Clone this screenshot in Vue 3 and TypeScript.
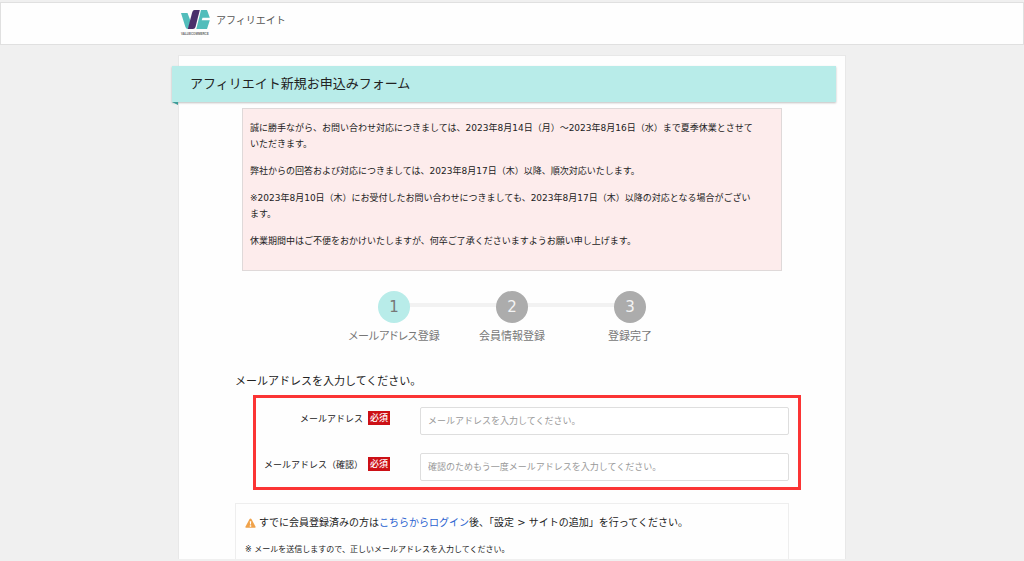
<script setup lang="ts">
import { ref } from 'vue'

interface Step {
  no: number
  label: string
}

interface Field {
  id: string
  label: string
  placeholder: string
}

const steps: Step[] = [
  { no: 1, label: 'メールアドレス登録' },
  { no: 2, label: '会員情報登録' },
  { no: 3, label: '登録完了' },
]
const current = ref(1)

const fields: Field[] = [
  { id: 'email', label: 'メールアドレス', placeholder: 'メールアドレスを入力してください。' },
  {
    id: 'email-confirm',
    label: 'メールアドレス（確認）',
    placeholder: '確認のためもう一度メールアドレスを入力してください。',
  },
]
const values = ref<Record<string, string>>({ email: '', 'email-confirm': '' })
</script>

<template>
  <div class="page">
    <header class="header">
      <div class="header-inner">
        <svg class="logo" viewBox="0 0 30 26" role="img" aria-label="VALUECOMMERCE">
          <path d="M0 3H6.500L9.500 11L7 19Q5 19 4.400 17Z" fill="#52bdbb" />
          <path d="M13.500 0H18.800L14.500 17Q13.900 19 12 19H6.800L11.300 2Q11.900 0 13.500 0Z" fill="#49306b" />
          <path d="M20 0H26L28.800 7.700H21.500L20.700 10.300H28.800L26 19H15.300Z" fill="#52bdbb" />
          <text class="logo-text" x="0" y="25">VALUECOMMERCE</text>
        </svg>
        <span class="service">アフィリエイト</span>
      </div>
    </header>

    <main class="card">
      <h1 class="ribbon">アフィリエイト新規お申込みフォーム</h1>

      <section class="notice">
        <p>
          誠に勝手ながら、お問い合わせ対応につきましては、2023年8月14日（月）〜2023年8月16日（水）まで夏季休業とさせて<br />いただきます。
        </p>
        <p>弊社からの回答および対応につきましては、2023年8月17日（木）以降、順次対応いたします。</p>
        <p>
          ※2023年8月10日（木）にお受付したお問い合わせにつきましても、2023年8月17日（木）以降の対応となる場合がござい<br />ます。
        </p>
        <p>休業期間中はご不便をおかけいたしますが、何卒ご了承くださいますようお願い申し上げます。</p>
      </section>

      <ol class="steps">
        <li v-for="s in steps" :key="s.no" class="step" :class="{ active: s.no === current }">
          <span class="circle">{{ s.no }}</span>
          <span class="step-label">{{ s.label }}</span>
        </li>
      </ol>

      <form class="form" @submit.prevent>
        <h2 class="lead">メールアドレスを入力してください。</h2>
        <div class="fields">
          <div v-for="f in fields" :key="f.id" class="row">
            <label class="label" :for="f.id">
              <span>{{ f.label }}</span>
              <span class="badge">必須</span>
            </label>
            <input :id="f.id" v-model="values[f.id]" class="input" type="email" :placeholder="f.placeholder" />
          </div>
        </div>
      </form>

      <section class="info">
        <p class="info-main">
          <svg class="warn" viewBox="0 0 12 11" aria-hidden="true">
            <path d="M6 .5Q6.600 .5 7 1.200L11.600 9.500Q12 10.700 10.800 10.800H1.200Q0 10.700 .4 9.500L5 1.200Q5.400 .5 6 .5Z" fill="#f0a24a" />
            <path d="M5.200 3.500H6.800L6.500 7.200H5.500ZM5.200 8H6.800V9.500H5.200Z" fill="#fff" />
          </svg>
          <span>すでに会員登録済みの方は<a href="#login">こちらからログイン</a>後、「設定 &gt; サイトの追加」を行ってください。</span>
        </p>
        <p class="info-sub">※ メールを送信しますので、正しいメールアドレスを入力してください。</p>
      </section>
    </main>
  </div>
</template>

<style>
body {
  margin: 0;
  background: #f0f0f0;
}
</style>

<style scoped>
.page {
  box-sizing: border-box;
  display: flex;
  flex-direction: column;
  min-height: 100vh;
  padding: 2px 0;
  background: #f0f0f0;
  color: #222;
  font-family: "DejaVu Sans", "Noto Sans CJK JP", sans-serif;
  font-size: 9px;
}
.page * {
  box-sizing: border-box;
}
p,
h1,
h2,
ol {
  margin: 0;
  padding: 0;
  font-weight: 400;
}
.header {
  border: 1px solid #e0e0e0;
  background: #fefefe;
}
.header-inner {
  display: flex;
  gap: 5px;
  width: 100%;
  max-width: 662px;
  height: 41px;
  margin: 0 auto;
  padding-top: 7px;
}
.logo {
  width: 30px;
  height: 26px;
  overflow: visible;
}
.logo-text {
  font-family: "Liberation Sans", Arial, sans-serif;
  font-size: 3px;
  font-weight: 700;
  fill: #666;
}
.service {
  color: #555;
  font-size: 10px;
  line-height: 22px;
}
.card {
  flex: 1;
  display: flex;
  flex-direction: column;
  width: 100%;
  max-width: 668px;
  margin: 10px auto 0;
  padding-top: 10px;
  border: 1px solid #e8e8e8;
  border-bottom: 0;
  background: #fefefe;
}
.ribbon {
  position: relative;
  margin: 0 9px 0 -7px;
  padding-left: 18px;
  background: #b8ece9;
  box-shadow: 0 1px 2px rgba(0, 0, 0, 0.25);
  font-size: 13px;
  line-height: 36px;
}
.ribbon::after {
  content: "";
  position: absolute;
  top: 100%;
  left: 0;
  border-top: 3px solid #3d9c98;
  border-left: 6px solid transparent;
}
.notice {
  display: flex;
  flex-direction: column;
  gap: 11px;
  margin: 6px 63px 0;
  padding: 11px 7px 21px;
  border: 1px solid #dfd9d9;
  background: #fdecec;
  line-height: 16px;
  white-space: nowrap;
}
.steps {
  display: flex;
  justify-content: center;
  margin-top: 20px;
  list-style: none;
}
.step {
  position: relative;
  display: flex;
  flex-direction: column;
  align-items: center;
  gap: 6px;
  width: 118px;
}
.step + .step::before {
  content: "";
  position: absolute;
  top: 12px;
  right: 50%;
  width: 100%;
  height: 4px;
  background: #f2f2f2;
}
.circle {
  position: relative;
  z-index: 1;
  width: 32px;
  border-radius: 50%;
  background: #acacac;
  color: #f4f4f4;
  font-size: 15px;
  line-height: 32px;
  text-align: center;
}
.active .circle {
  z-index: 2;
  background: #b8ece9;
  color: #777;
}
.step-label {
  color: #777;
  font-size: 11px;
  font-feature-settings: "palt";
  line-height: 16px;
}
.form {
  margin: 28px 44px 0 56px;
}
.lead {
  font-size: 11px;
  line-height: 18px;
}
.fields {
  display: flex;
  flex-direction: column;
  gap: 18px;
  margin: 4px 0 0 18px;
  padding: 9px 9px 6px 7px;
  border: 3px solid #fb3434;
}
.row {
  display: flex;
  gap: 30px;
}
.label {
  display: flex;
  align-items: center;
  justify-content: flex-end;
  gap: 5px;
  width: 127px;
  height: 22px;
}
.badge {
  padding: 0 2px;
  background: #cc1016;
  color: #fff;
  font-weight: 500;
  line-height: 14px;
}
.input {
  flex: 1;
  min-width: 0;
  height: 28px;
  padding: 0 7px;
  border: 1px solid #dedede;
  border-radius: 2px;
  background: #fff;
  color: #333;
  font: inherit;
}
.input::placeholder {
  color: #999;
  opacity: 1;
}
.info {
  flex: 1;
  margin: 13px 56px 0;
  padding: 9px 9px 0;
  border: 1px solid #eee;
  border-bottom: 0;
}
.info-main {
  display: flex;
  align-items: center;
  gap: 3px;
  font-size: 10px;
  line-height: 20px;
}
.warn {
  width: 11px;
  height: 10px;
}
.info-main a {
  color: #2a62d0;
  text-decoration: none;
}
.info-sub {
  margin-top: 9px;
  font-size: 8px;
  line-height: 16px;
}
</style>
